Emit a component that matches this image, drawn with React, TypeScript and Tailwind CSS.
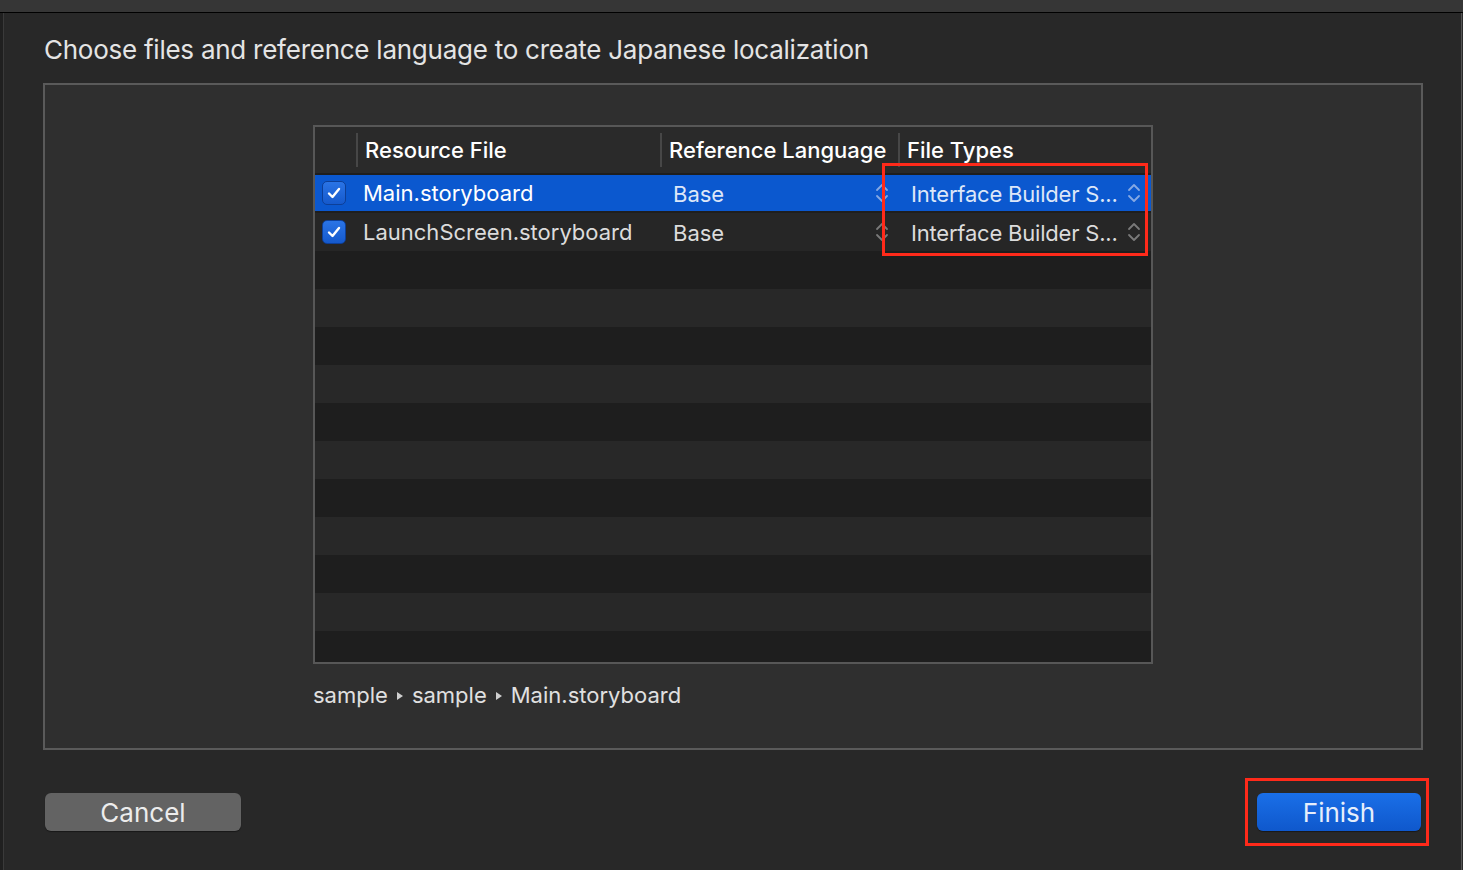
import React from "react";

const font = { fontFamily: "Inter, 'Noto Sans', 'Liberation Sans', sans-serif" };

function Check() {
  return (
    <div className="w-[24px] h-[24px] rounded-[5px] bg-gradient-to-b from-[#2a74e6] to-[#1559cc] border border-[#0d3f98] flex items-center justify-center">
      <svg width="18" height="18" viewBox="0 0 18 18">
        <path d="M4 9.5 L7.5 13 L14 5" fill="none" stroke="#ffffff" strokeWidth="2.4" strokeLinecap="round" strokeLinejoin="round" />
      </svg>
    </div>
  );
}

function Updown({ color }: { color: string }) {
  return (
    <svg width="14" height="24" viewBox="0 0 14 24">
      <path d="M2 9 L7 4 L12 9" fill="none" stroke={color} strokeWidth="1.8" strokeLinecap="round" strokeLinejoin="round" />
      <path d="M2 15 L7 20 L12 15" fill="none" stroke={color} strokeWidth="1.8" strokeLinecap="round" strokeLinejoin="round" />
    </svg>
  );
}

function Tri() {
  return (
    <svg width="6" height="8" viewBox="0 0 6 8" className="mx-[9px] mt-[2px]">
      <path d="M0 0 L6 4 L0 8 Z" fill="#cfcfcf" />
    </svg>
  );
}

const rows = [
  { name: "Main.storyboard", selected: true },
  { name: "LaunchScreen.storyboard", selected: false },
];

export default function App() {
  const stripes = Array.from({ length: 11 }, (_, i) => i + 2);
  return (
    <div className="w-[1463px] h-[870px] overflow-hidden bg-[#282828] flex flex-col relative" style={font}>
      <div className="h-[13px] bg-[#363636] border-b border-black shrink-0" />
      <div className="flex flex-1 min-h-0">
        <div className="w-[4px] bg-[#202020] border-r border-[#3a3a3a] shrink-0" />
        <div className="flex-1 flex flex-col">
          <div className="pl-[40px] mt-[21px] h-[32px] leading-[32px] text-[26px] text-[#e4e4e4] tracking-[-0.25px]">
            Choose files and reference language to create Japanese localization
          </div>
          <div className="ml-[39px] mr-[38px] mt-[17px] h-[667px] border-2 border-[#5a5a5a] bg-[#2f2f2f] pl-[268px] pt-[40px]">
            <div className="w-[840px] h-[539px] border-2 border-[#575757] bg-[#1e1e1e] flex flex-col overflow-hidden">
              <div className="h-[48px] shrink-0 bg-[#2a2a2a] border-b-2 border-[#1e1e1e] flex items-center text-[22px] text-white font-medium">
                <div className="w-[41px] h-full" />
                <div className="w-[2px] h-[34px] bg-[#474747]" />
                <div className="w-[302px] pl-[7px] pt-[1px]">Resource File</div>
                <div className="w-[2px] h-[34px] bg-[#474747]" />
                <div className="w-[236px] pl-[7px] pt-[1px]">Reference Language</div>
                <div className="w-[2px] h-[34px] bg-[#474747]" />
                <div className="pl-[7px] pt-[1px]">File Types</div>
              </div>
              {rows.map((r, i) => (
                <div key={r.name} className={`h-[38px] shrink-0 ${r.selected ? "bg-[#1e1e1e]" : "bg-[#262626]"}`}>
                  <div
                    className={`h-[36px] flex items-center text-[22px] ${r.selected ? "bg-[#0b58cf]" : ""} ${i === 1 ? "mt-[1px]" : ""}`}
                  >
                    <div className="w-[48px] pl-[7px] flex items-center">
                      <Check />
                    </div>
                    <div className={`w-[310px] ${r.selected ? "text-white" : "text-[#dcdcdc]"}`}>{r.name}</div>
                    <div className={`w-[202px] pt-[2px] ${r.selected ? "text-[#dde7f8]" : "text-[#dcdcdc]"}`}>Base</div>
                    <div className="w-[36px] flex items-center">
                      <Updown color={r.selected ? "#86a9e4" : "#7a7a7a"} />
                    </div>
                    <div className={`w-[216px] pt-[2px] tracking-[-0.2px] ${r.selected ? "text-[#dde7f8]" : "text-[#dcdcdc]"}`}>Interface Builder S...</div>
                    <div className="flex items-center">
                      <Updown color={r.selected ? "#86a9e4" : "#7a7a7a"} />
                    </div>
                  </div>
                </div>
              ))}
              {stripes.map((i) => (
                <div key={i} className={`h-[38px] shrink-0 ${i % 2 === 0 ? "bg-[#1e1e1e]" : "bg-[#282828]"}`} />
              ))}
            </div>
            <div className="mt-[17px] h-[28px] flex items-center text-[22px] text-[#e0e0e0]">
              <span>sample</span>
              <Tri />
              <span>sample</span>
              <Tri />
              <span>Main.storyboard</span>
            </div>
          </div>
          <div className="mt-[43px] flex justify-between">
            <div className="ml-[41px] w-[196px] h-[38px] rounded-[6px] bg-[#636363] shadow-[0_1px_1px_rgba(0,0,0,0.4)] flex items-center justify-center text-[26px] text-[#ececec]">
              Cancel
            </div>
            <div className="mr-[40px] w-[164px] h-[38px] rounded-[6px] bg-gradient-to-b from-[#1a6fe8] to-[#0f58cc] shadow-[0_1px_1px_rgba(0,0,0,0.4)] flex items-center justify-center text-[26px] text-[#e6eefb]">
              Finish
            </div>
          </div>
        </div>
        <div className="w-[2px] border-l border-[#555555] bg-[#2a2a2a] shrink-0" />
      </div>
      <div className="absolute left-[882px] top-[163px] w-[266px] h-[93px] border-[3px] border-[#ff2a1a]" />
      <div className="absolute left-[1245px] top-[778px] w-[184px] h-[68px] border-[3px] border-[#ff2a1a]" />
    </div>
  );
}
